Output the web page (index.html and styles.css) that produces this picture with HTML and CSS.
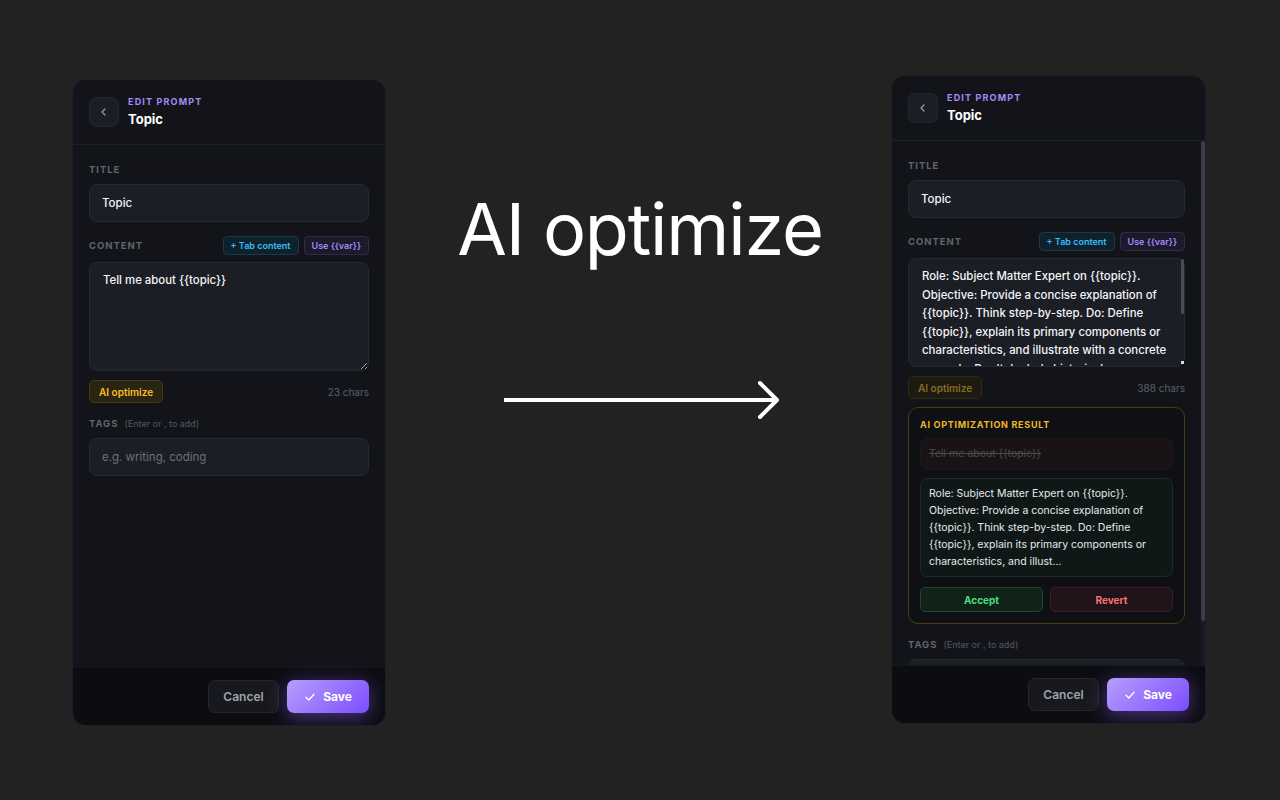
FILE: index.html
```html
<!DOCTYPE html>
<html lang="en">
<head>
  <meta charset="UTF-8">
  <meta name="viewport" content="width=device-width, initial-scale=1.0">
  <title>AI optimize</title>
  <link rel="stylesheet" href="styles.css">
</head>
<body>
  <div class="stage">

    <!-- before: plain prompt -->
    <section class="panel panel-before">
      <header class="panel-head">
        <button class="back-btn" type="button">
          <svg width="10" height="10" viewBox="0 0 10 10"><path d="M6 2 3 5l3 3" fill="none" stroke="#9aa0a9" stroke-width="1.2" stroke-linecap="round" stroke-linejoin="round"/></svg>
        </button>
        <div class="head-text">
          <div class="eyebrow">Edit prompt</div>
          <div class="head-title">Topic</div>
        </div>
      </header>
      <div class="panel-body">
        <div class="field">
          <label class="field-label">Title</label>
          <input class="text-input" type="text" value="Topic">
        </div>
        <div class="field">
          <div class="label-row">
            <label class="field-label">Content</label>
            <div class="chip-group">
              <button class="chip chip-tab" type="button">+ Tab content</button>
              <button class="chip chip-var" type="button">Use {{var}}</button>
            </div>
          </div>
          <textarea class="text-area">Tell me about {{topic}}</textarea>
          <div class="tools-row">
            <button class="ai-btn" type="button">AI optimize</button>
            <span class="char-count">23 chars</span>
          </div>
        </div>
        <div class="field">
          <label class="field-label">Tags <span class="hint">(Enter or , to add)</span></label>
          <input class="text-input" type="text" placeholder="e.g. writing, coding">
        </div>
      </div>
      <footer class="panel-foot">
        <button class="btn-cancel" type="button">Cancel</button>
        <button class="btn-save" type="button">
          <svg width="12" height="12" viewBox="0 0 12 12"><path d="M2 6.3 4.8 9 10 3.2" fill="none" stroke="#fff" stroke-width="1.4" stroke-linecap="round" stroke-linejoin="round"/></svg>
          Save
        </button>
      </footer>
    </section>

    <div class="middle">
      <h1 class="headline">AI optimize</h1>
      <svg class="arrow" width="280" height="40" viewBox="0 0 280 40">
        <path d="M3 20H275" stroke="#fff" stroke-width="4"/>
        <path d="M259 3 276 20 259 37" fill="none" stroke="#fff" stroke-width="4" stroke-linecap="round" stroke-linejoin="round"/>
      </svg>
    </div>

    <!-- after: optimized prompt -->
    <section class="panel panel-after">
      <header class="panel-head">
        <button class="back-btn" type="button">
          <svg width="10" height="10" viewBox="0 0 10 10"><path d="M6 2 3 5l3 3" fill="none" stroke="#9aa0a9" stroke-width="1.2" stroke-linecap="round" stroke-linejoin="round"/></svg>
        </button>
        <div class="head-text">
          <div class="eyebrow">Edit prompt</div>
          <div class="head-title">Topic</div>
        </div>
      </header>
      <div class="scroll-wrap">
        <div class="panel-body panel-scroll">
          <div class="field">
            <label class="field-label">Title</label>
            <input class="text-input" type="text" value="Topic">
          </div>
          <div class="field">
            <div class="label-row">
              <label class="field-label">Content</label>
              <div class="chip-group">
                <button class="chip chip-tab" type="button">+ Tab content</button>
                <button class="chip chip-var" type="button">Use {{var}}</button>
              </div>
            </div>
            <div class="area-wrap">
              <textarea class="text-area text-area-long">Role: Subject Matter Expert on {{topic}}. Objective: Provide a concise explanation of {{topic}}. Think step-by-step. Do: Define {{topic}}, explain its primary components or characteristics, and illustrate with a concrete example. Don't: Include historical background or unrelated tangents. Format: A short definition, then 3-5 bullet points and one example.</textarea>
              <span class="area-thumb"></span>
              <span class="area-corner"></span>
            </div>
            <div class="tools-row">
              <button class="ai-btn" type="button" disabled>AI optimize</button>
              <span class="char-count">388 chars</span>
            </div>
            <div class="result">
              <div class="result-title">AI optimization result</div>
              <div class="old-text">Tell me about {{topic}}</div>
              <div class="new-text">Role: Subject Matter Expert on {{topic}}. Objective: Provide a concise explanation of {{topic}}. Think step-by-step. Do: Define {{topic}}, explain its primary components or characteristics, and illust...</div>
              <div class="result-actions">
                <button class="btn-accept" type="button">Accept</button>
                <button class="btn-revert" type="button">Revert</button>
              </div>
            </div>
          </div>
          <div class="field">
            <label class="field-label">Tags <span class="hint">(Enter or , to add)</span></label>
            <input class="text-input" type="text" placeholder="e.g. writing, coding">
          </div>
        </div>
        <div class="scroll-track"><span class="scroll-thumb"></span></div>
      </div>
      <footer class="panel-foot">
        <button class="btn-cancel" type="button">Cancel</button>
        <button class="btn-save" type="button">
          <svg width="12" height="12" viewBox="0 0 12 12"><path d="M2 6.3 4.8 9 10 3.2" fill="none" stroke="#fff" stroke-width="1.4" stroke-linecap="round" stroke-linejoin="round"/></svg>
          Save
        </button>
      </footer>
    </section>

  </div>
</body>
</html>
```

FILE: styles.css
```css
* {
  box-sizing: border-box;
}

body {
  margin: 0;
  background-color: #222222;
  font-family: Inter, "Noto Sans", sans-serif;
  color: #e5e7eb;
  color-scheme: dark;
}

button,
input,
textarea {
  font-family: inherit;
}

.stage {
  display: flex;
  align-items: flex-start;
  padding-left: 72px;
}

/* panels */

.panel {
  display: flex;
  flex-direction: column;
  width: 314px;
  background: #12141a;
  border: 1px solid #1c1f26;
  border-radius: 14px;
  overflow: hidden;
}

.panel-before {
  margin-top: 79px;
  height: 647px;
}

.panel-after {
  margin-top: 75px;
  height: 649px;
  width: 315px;
}

.panel-head {
  display: flex;
  align-items: center;
  gap: 9px;
  height: 65px;
  padding: 0 16px;
  border-bottom: 1px solid #1c1f26;
  flex-shrink: 0;
}

.back-btn {
  display: flex;
  align-items: center;
  justify-content: center;
  width: 30px;
  height: 30px;
  padding: 0;
  background: #1b1e25;
  border: 1px solid #23262e;
  border-radius: 7px;
}

.eyebrow {
  font-size: 9px;
  font-weight: 700;
  letter-spacing: 0.13em;
  text-transform: uppercase;
  color: #a58bf7;
  line-height: 11px;
}

.head-title {
  margin-top: 4px;
  font-size: 13px;
  font-weight: 700;
  color: #ffffff;
  line-height: 17px;
}

.panel-body {
  flex: 1;
  display: flex;
  flex-direction: column;
  gap: 14px;
  padding: 18px 16px 16px;
  overflow: hidden;
}

.scroll-wrap {
  position: relative;
  flex: 1;
  display: flex;
  min-height: 0;
}

.panel-scroll {
  padding-right: 20px;
}

.scroll-track {
  position: absolute;
  top: 0;
  right: 0;
  bottom: 0;
  width: 4px;
  background: #181a1f;
}

.scroll-thumb {
  display: block;
  height: 480px;
  background: #3b3d43;
  border-radius: 2px;
}

/* fields */

.field {
  display: flex;
  flex-direction: column;
  flex-shrink: 0;
}

.field-label {
  display: block;
  margin-bottom: 7px;
  font-size: 9.5px;
  font-weight: 700;
  letter-spacing: 0.1em;
  line-height: 14px;
  text-transform: uppercase;
  color: #60646d;
}

.hint {
  margin-left: 3px;
  font-size: 9px;
  font-weight: 400;
  letter-spacing: 0;
  text-transform: none;
  color: #555962;
}

.label-row {
  display: flex;
  align-items: center;
  justify-content: space-between;
  margin-bottom: 7px;
}

.label-row .field-label {
  margin-bottom: 0;
}

.chip-group {
  display: flex;
  gap: 5px;
}

.chip {
  height: 19px;
  padding: 0 7px;
  font-size: 9px;
  font-weight: 600;
  border-radius: 4px;
}

.chip-tab {
  background: #0f212b;
  border: 1px solid #1b3a48;
  color: #38bdf8;
}

.chip-var {
  background: #1a1a2b;
  border: 1px solid #2f2c45;
  color: #a78bfa;
}

.text-input {
  width: 100%;
  height: 38px;
  padding: 0 12px;
  background: #1b1e25;
  border: 1px solid #262932;
  border-radius: 8px;
  font-size: 11.5px;
  font-weight: 500;
  color: #f4f5f7;
  outline: none;
}

.text-input::placeholder {
  color: #6c7079;
  font-weight: 400;
}

.text-area {
  display: block;
  width: 100%;
  height: 109px;
  padding: 8px 13px;
  background: #1b1e25;
  border: 1px solid #262932;
  border-radius: 8px;
  font-size: 11.4px;
  font-weight: 500;
  line-height: 18.6px;
  color: #f4f5f7;
  resize: vertical;
  outline: none;
}

.area-wrap {
  position: relative;
}

.text-area-long {
  padding-right: 15px;
  overflow: hidden;
  resize: none;
}

.area-thumb {
  position: absolute;
  top: 1px;
  right: 1px;
  width: 3px;
  height: 55px;
  background: #4a4d55;
  border-radius: 2px;
}

.area-corner {
  position: absolute;
  right: 1px;
  bottom: 3px;
  width: 3px;
  height: 3px;
  background: #d8d9dc;
}

.tools-row {
  display: flex;
  align-items: center;
  justify-content: space-between;
  margin-top: 9px;
}

.ai-btn {
  height: 23px;
  padding: 0 9px;
  background: #2a2413;
  border: 1px solid #463917;
  border-radius: 5px;
  font-size: 10px;
  font-weight: 600;
  color: #fbbf24;
}

.ai-btn:disabled {
  background: #1d1a12;
  border-color: #2f2915;
  color: #8a6d20;
}

.char-count {
  font-size: 10px;
  color: #5c6069;
}

/* optimization result */

.result {
  margin-top: 8px;
  padding: 11px;
  background: #0e1014;
  border: 1px solid #4a3b13;
  border-radius: 10px;
}

.result-title {
  margin-bottom: 7px;
  font-size: 9px;
  font-weight: 700;
  letter-spacing: 0.08em;
  line-height: 12px;
  text-transform: uppercase;
  color: #f1b62a;
}

.old-text {
  height: 32px;
  padding: 0 8px;
  background: #191316;
  border: 1px solid #1d171a;
  border-radius: 7px;
  font-size: 10.5px;
  line-height: 30px;
  color: #4b4a50;
  text-decoration: line-through;
}

.new-text {
  margin-top: 8px;
  padding: 6px 8px;
  background: #0f1816;
  border: 1px solid #1c2b26;
  border-radius: 7px;
  font-size: 10.5px;
  line-height: 17px;
  color: #e8eaed;
}

.result-actions {
  display: grid;
  grid-template-columns: 1fr 1fr;
  gap: 7px;
  margin-top: 10px;
}

.btn-accept,
.btn-revert {
  height: 25px;
  border-radius: 5px;
  font-size: 10px;
  font-weight: 700;
}

.btn-accept {
  background: #112218;
  border: 1px solid #1e4530;
  color: #4ade80;
}

.btn-revert {
  background: #20141a;
  border: 1px solid #3b1d23;
  color: #f87171;
}

/* footer */

.panel-foot {
  display: flex;
  justify-content: flex-end;
  gap: 8px;
  padding: 12px 16px;
  background: #0c0d11;
  border-top: 1px solid #16181d;
  flex-shrink: 0;
}

.btn-cancel {
  width: 71px;
  height: 33px;
  background: #18191e;
  border: 1px solid #25272d;
  border-radius: 7px;
  font-size: 12px;
  font-weight: 600;
  color: #9ea2aa;
}

.btn-save {
  display: flex;
  align-items: center;
  justify-content: center;
  gap: 7px;
  width: 82px;
  height: 33px;
  background: linear-gradient(135deg, #b69efc 0%, #7c4dff 100%);
  border: none;
  border-radius: 7px;
  font-size: 12px;
  font-weight: 700;
  color: #ffffff;
  box-shadow: 0 4px 20px rgba(139, 92, 246, 0.5);
}

/* middle caption */

.middle {
  display: flex;
  flex-direction: column;
  align-items: center;
  width: 505px;
}

.headline {
  margin: 193px 0 0 3px;
  font-size: 72px;
  font-weight: 400;
  letter-spacing: -1.2px;
  line-height: 1;
  color: #ffffff;
}

.arrow {
  display: block;
  margin: 115px 0 0 5px;
}
```
